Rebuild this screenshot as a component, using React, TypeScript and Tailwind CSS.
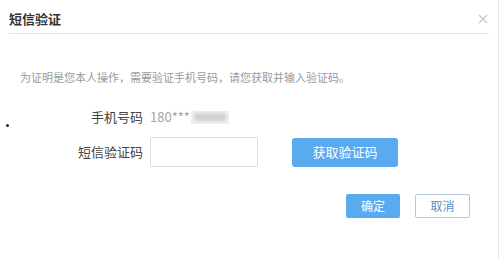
import React from 'react';

const font = { fontFamily: '"Microsoft YaHei", "Noto Sans CJK SC", "Noto Sans", sans-serif' };

export default function App() {
  return (
    <div style={font} className="relative w-[499px] h-[258px] bg-white border-r border-[#e3e3e3] text-[#333]">
      {/* header */}
      <div className="ml-[9px] mr-[9px] h-[34px] pt-[4px] flex items-center justify-between border-b border-[#e2e2e2]">
        <span className="text-[13px] font-bold text-[#333] leading-none">短信验证</span>
        <svg width="10" height="10" viewBox="0 0 10 10" className="mr-[1px]">
          <path d="M1 1 L9 9 M9 1 L1 9" stroke="#c8c8c8" strokeWidth="1.2" />
        </svg>
      </div>

      {/* body */}
      <div className="pl-[20px] pt-[37px] text-[11px] leading-[12px] text-[#9a9a9a]">
        为证明是您本人操作，需要验证手机号码，请您获取并输入验证码。
      </div>

      <div className="mt-[26px] flex items-center h-[16px]">
        <span className="w-[143px] text-right text-[13px] text-[#444]">手机号码</span>
        <span className="ml-[7px] text-[13px] text-[#a5a5a5]">180***</span>
        <div className="ml-[1px] w-[38px] h-[13px] bg-[#f0f0f0] blur-[0.5px] flex items-center justify-center">
          <div className="w-[32px] h-[8px] bg-[#d2d2d2] blur-[1.5px]" />
        </div>
      </div>

      <div className="mt-[12px] flex items-center h-[30px]">
        <span className="w-[143px] text-right text-[13px] text-[#444]">短信验证码</span>
        <input className="ml-[7px] w-[108px] h-[30px] border border-[#dcdcdc] rounded-[2px] outline-none" />
        <button className="ml-[34px] w-[106px] h-[29px] rounded-[3px] bg-[#5aaaf0] text-white text-[13px]">
          获取验证码
        </button>
      </div>

      <div className="mt-[27px] flex justify-end pr-[28px] gap-[15px]">
        <button className="w-[54px] h-[24px] rounded-[2px] bg-[#5aaaf0] text-white text-[12px]">确定</button>
        <button className="w-[55px] h-[24px] rounded-[2px] border border-[#b3c9de] text-[#5d8bbd] text-[12px] bg-white">
          取消
        </button>
      </div>

      <span className="absolute left-[6px] top-[124px] w-[3px] h-[3px] rounded-full bg-[#222]" />
    </div>
  );
}
